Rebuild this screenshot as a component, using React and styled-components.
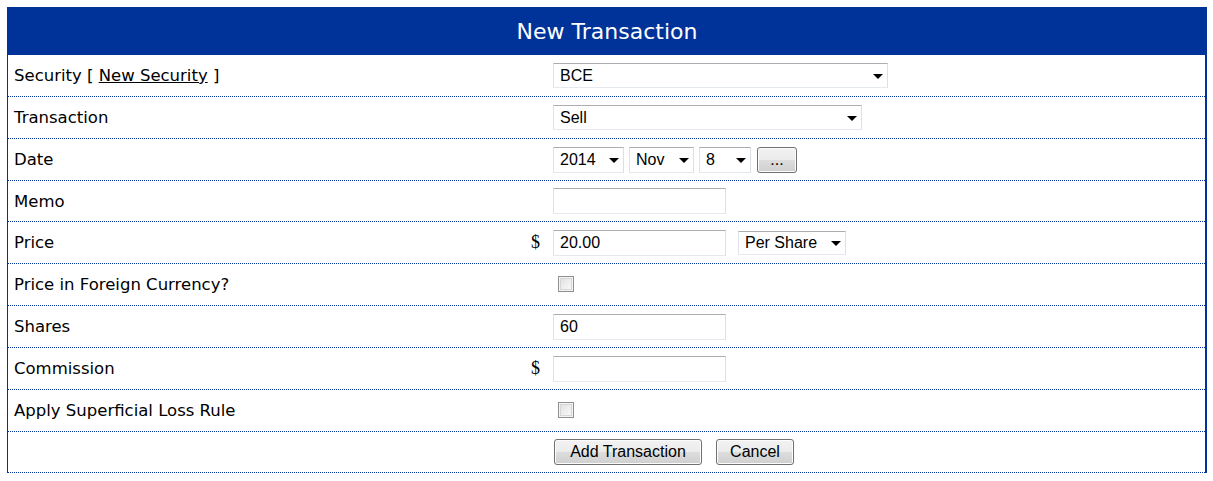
import React from "react";
import styled, { createGlobalStyle, css } from "styled-components";

const Global = createGlobalStyle`
  html, body { margin: 0; padding: 0; background: #fff; }
  body { padding: 7px; font-family: "DejaVu Sans", "Noto Sans", sans-serif; }
`;

const BLUE = "#003399";

const Panel = styled.div`
  width: 1200px;
`;

const Header = styled.div`
  height: 48px;
  background: ${BLUE};
  color: #fff;
  display: flex;
  align-items: center;
  justify-content: center;
  font-size: 22px;
  font-family: "DejaVu Sans", "Noto Sans", sans-serif;
`;

const Body = styled.div`
  border-left: 1px solid ${BLUE};
  border-right: 2px solid ${BLUE};
`;

const Row = styled.div`
  display: grid;
  grid-template-columns: 510px 27px 1fr;
  align-items: center;
  height: ${(p) => p.$h || 41}px;
  border-bottom: 1px dotted ${BLUE};
`;

const Label = styled.div`
  padding-left: 6px;
  font-size: 16.5px;
  color: #000;
  white-space: nowrap;
`;

const Link = styled.a`
  color: #000;
  text-decoration: underline;
  cursor: pointer;
`;

const Currency = styled.div`
  text-align: right;
  padding-right: 5px;
  font-family: "Liberation Serif", serif;
  font-size: 18px;
  color: #000;
`;

const Controls = styled.div`
  padding-left: 8px;
  display: flex;
  align-items: center;
  gap: ${(p) => p.$gap || 0}px;
`;

const fieldBorder = css`
  border: 1px solid;
  border-color: #abadb3 #dbdfe6 #e3e9ef #e2e3ea;
  box-sizing: border-box;
  background: #fff;
  font-family: "Liberation Sans", Arial, sans-serif;
  font-size: 16px;
  color: #000;
`;

const SelectWrap = styled.div`
  position: relative;
  width: ${(p) => p.$w}px;
  height: ${(p) => p.$h || 25}px;
  margin-left: ${(p) => p.$ml || 0}px;
  &::after {
    content: "";
    position: absolute;
    right: 5px;
    top: 50%;
    margin-top: -2px;
    border-left: 5px solid transparent;
    border-right: 5px solid transparent;
    border-top: 5px solid #000;
    pointer-events: none;
  }
`;

const Select = styled.select`
  ${fieldBorder}
  appearance: none;
  -webkit-appearance: none;
  width: 100%;
  height: 100%;
  padding: 0 0 0 6px;
  margin: 0;
  border-radius: 0;
  outline: none;
`;

const TextInput = styled.input`
  ${fieldBorder}
  width: 173px;
  height: 26px;
  padding: 0 6px;
  margin: 0;
  outline: none;
`;

const Button = styled.button`
  height: 26px;
  width: ${(p) => p.$w}px;
  margin: 0;
  margin-left: ${(p) => p.$ml || 0}px;
  padding: 0;
  border: 1px solid #707070;
  border-radius: 3px;
  background: linear-gradient(#f2f2f2 0%, #ebebeb 50%, #dddddd 51%, #cfcfcf 100%);
  font-family: "Liberation Sans", Arial, sans-serif;
  font-size: 16px;
  color: #000;
  box-shadow: inset 0 0 0 1px #fcfcfc;
  cursor: pointer;
`;

const Check = styled.input.attrs({ type: "checkbox" })`
  appearance: none;
  -webkit-appearance: none;
  width: 16px;
  height: 16px;
  margin: 0 0 2px 5px;
  box-sizing: border-box;
  border: 1px solid #8e8f8f;
  background: linear-gradient(135deg, #dcdcdc 0%, #eeeeee 50%, #fbfbfb 100%);
  box-shadow: inset 0 0 0 1px #f4f4f4, inset 0 0 0 2px #d6d6d6;
`;

const Opt = ({ w, h, ml, value }) => (
  <SelectWrap $w={w} $h={h} $ml={ml}>
    <Select defaultValue={value}>
      <option>{value}</option>
    </Select>
  </SelectWrap>
);

export default function App() {
  return (
    <>
      <Global />
      <Panel>
        <Header>New Transaction</Header>
        <Body>
          <Row>
            <Label>
              Security [ <Link>New Security</Link> ]
            </Label>
            <Currency />
            <Controls>
              <Opt w={335} h={25} value="BCE" />
            </Controls>
          </Row>
          <Row>
            <Label>Transaction</Label>
            <Currency />
            <Controls>
              <Opt w={309} h={25} value="Sell" />
            </Controls>
          </Row>
          <Row>
            <Label>Date</Label>
            <Currency />
            <Controls $gap={5}>
              <Opt w={71} h={26} value="2014" />
              <Opt w={65} h={26} value="Nov" />
              <Opt w={52} h={26} value="8" />
              <Button $w={40} $ml={1}>...</Button>
            </Controls>
          </Row>
          <Row $h={40}>
            <Label>Memo</Label>
            <Currency />
            <Controls>
              <TextInput defaultValue="" />
            </Controls>
          </Row>
          <Row>
            <Label>Price</Label>
            <Currency>$</Currency>
            <Controls>
              <TextInput defaultValue="20.00" />
              <Opt w={108} h={24} ml={12} value="Per Share" />
            </Controls>
          </Row>
          <Row>
            <Label>Price in Foreign Currency?</Label>
            <Currency />
            <Controls>
              <Check />
            </Controls>
          </Row>
          <Row>
            <Label>Shares</Label>
            <Currency />
            <Controls>
              <TextInput defaultValue="60" />
            </Controls>
          </Row>
          <Row>
            <Label>Commission</Label>
            <Currency>$</Currency>
            <Controls>
              <TextInput defaultValue="" />
            </Controls>
          </Row>
          <Row>
            <Label>Apply Superficial Loss Rule</Label>
            <Currency />
            <Controls>
              <Check />
            </Controls>
          </Row>
          <Row $h={40}>
            <Label />
            <Currency />
            <Controls $gap={14}>
              <Button $w={148} $ml={1}>Add Transaction</Button>
              <Button $w={78}>Cancel</Button>
            </Controls>
          </Row>
        </Body>
      </Panel>
    </>
  );
}
